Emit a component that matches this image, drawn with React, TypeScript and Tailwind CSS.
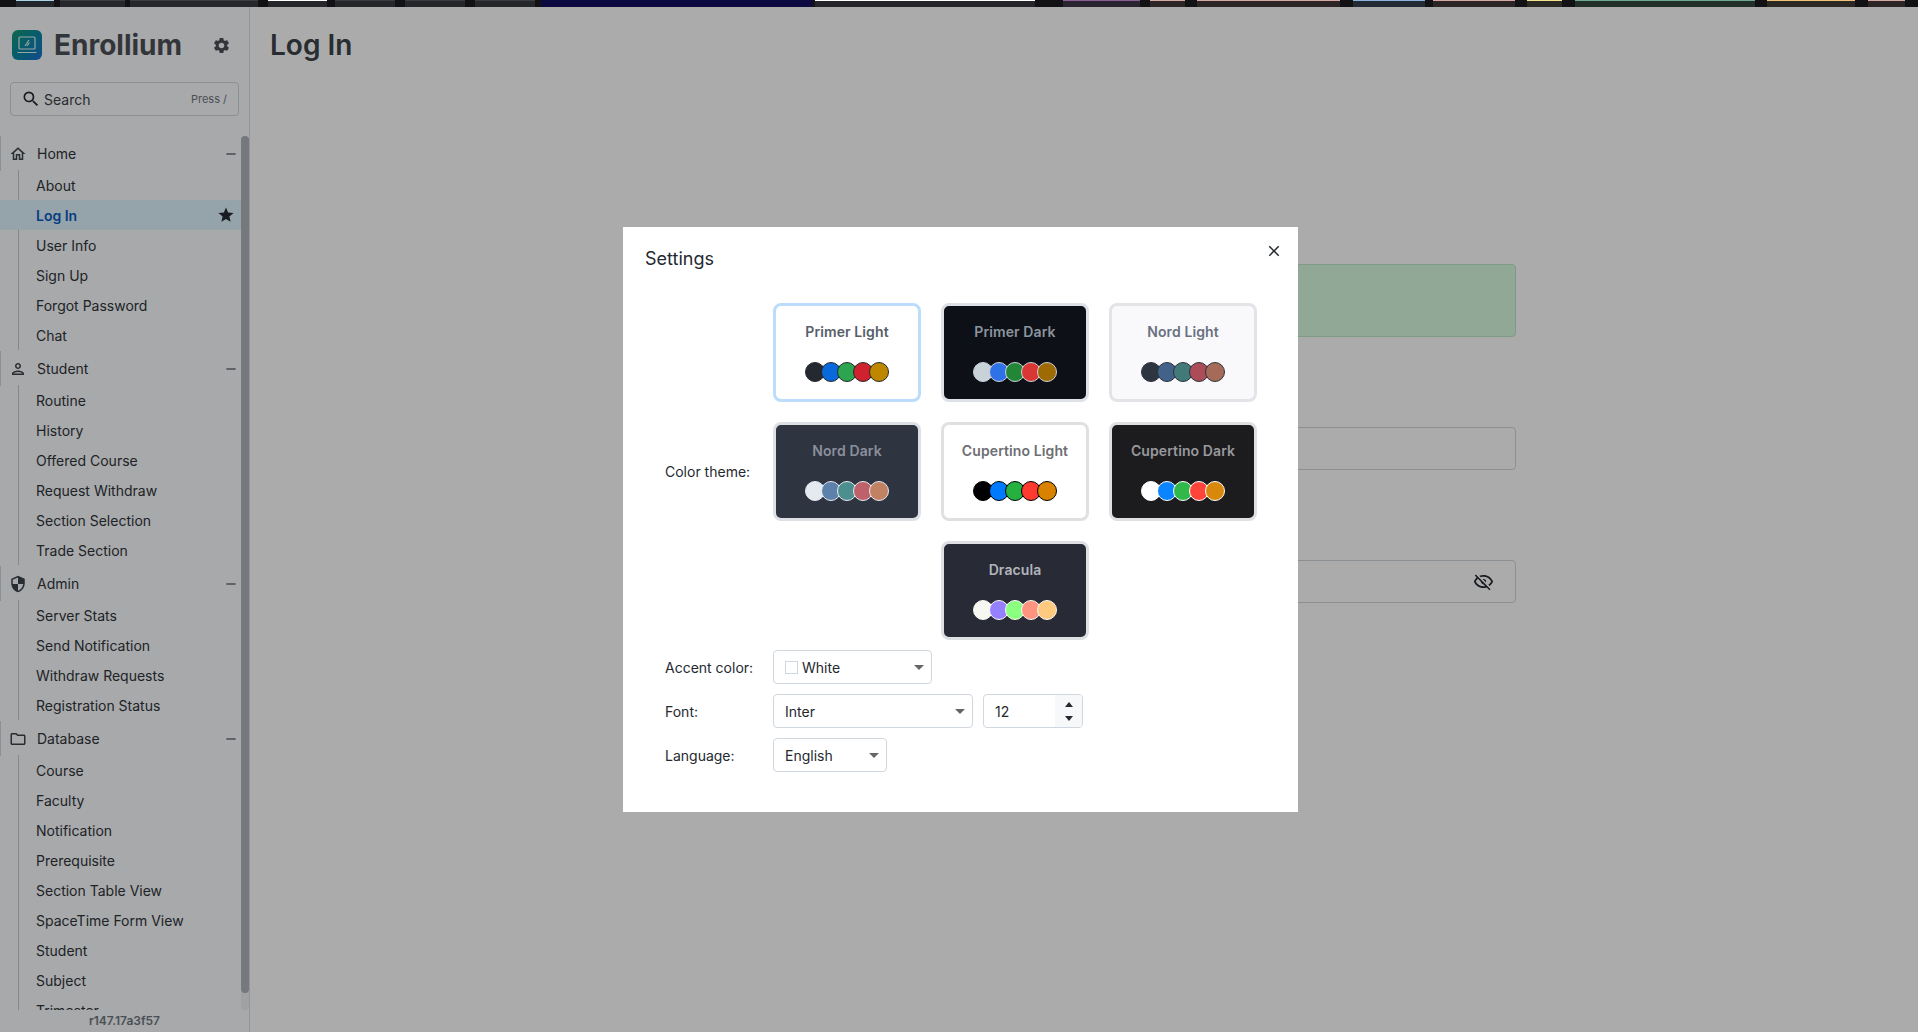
import {
  MdClose,
  MdOutlineFolder,
  MdOutlineHome,
  MdOutlinePerson,
  MdRemove,
  MdSearch,
  MdSecurity,
  MdSettings,
  MdStar,
} from "react-icons/md";

const strip = [
  "w-[16px]",
  "w-[38px] border-t border-[#a8d4e6] bg-[#23262b]",
  "w-[6px]",
  "w-[65px] border-t border-[#3c3d42] bg-[#26272b]",
  "w-[5px]",
  "w-[128px] border-t border-[#3c3d42] bg-[#26272b]",
  "w-[10px]",
  "w-[59px] border-t border-white bg-[#26272b]",
  "w-[8px]",
  "w-[60px] border-t border-[#3c3d42] bg-[#26272b]",
  "w-[10px]",
  "w-[60px] border-t border-[#3c3d42] bg-[#26272b]",
  "w-[10px]",
  "w-[60px] border-t border-[#3c3d42] bg-[#26272b]",
  "w-[6px]",
  "w-[271px] bg-[#0c0840]",
  "w-[3px]",
  "w-[220px] border-t border-white bg-[#26262a]",
  "w-[28px]",
  "w-[77px] border-t border-[#8a5d96] bg-[#2a2430]",
  "w-[10px]",
  "w-[35px] border-t border-[#d8a8a4] bg-[#2c2526]",
  "w-[12px]",
  "w-[143px] border-t border-[#d8a8a4] bg-[#2c2526]",
  "w-[13px]",
  "w-[72px] border-t border-[#8db4dc] bg-[#232a33]",
  "w-[8px]",
  "w-[82px] border-t border-[#d8a8a4] bg-[#2c2526]",
  "w-[12px]",
  "w-[35px] border-t border-[#f2e48e] bg-[#2c2a24]",
  "w-[13px]",
  "w-[180px] border-t border-[#6fa896] bg-[#233029]",
  "w-[12px]",
  "w-[88px] border-t border-[#f0c27a] bg-[#2c2824]",
  "w-[13px]",
  "w-[37px] border-t border-[#d8a8a4] bg-[#2c2526]",
];

const sections = [
  { name: "Home", icon: MdOutlineHome, items: ["About", "Log In", "User Info", "Sign Up", "Forgot Password", "Chat"] },
  {
    name: "Student",
    icon: MdOutlinePerson,
    items: ["Routine", "History", "Offered Course", "Request Withdraw", "Section Selection", "Trade Section"],
  },
  {
    name: "Admin",
    icon: MdSecurity,
    items: ["Server Stats", "Send Notification", "Withdraw Requests", "Registration Status"],
  },
  {
    name: "Database",
    icon: MdOutlineFolder,
    items: [
      "Course",
      "Faculty",
      "Notification",
      "Prerequisite",
      "Section Table View",
      "SpaceTime Form View",
      "Student",
      "Subject",
      "Trimester",
    ],
  },
];

const themes = [
  {
    name: "Primer Light",
    card: "bg-white border-[#bcdcfb] text-[#57606a]",
    ring: "border-[#24292f]",
    dots: ["bg-[#24292f]", "bg-[#0969da]", "bg-[#2da44e]", "bg-[#cf222e]", "bg-[#bf8700]"],
  },
  {
    name: "Primer Dark",
    card: "bg-[#0d1117] border-[#dee1e5] text-[#8b949e]",
    ring: "border-[#c9d1d9]",
    dots: ["bg-[#c9d1d9]", "bg-[#2f72e8]", "bg-[#238636]", "bg-[#da3633]", "bg-[#9e6a03]"],
  },
  {
    name: "Nord Light",
    card: "bg-[#f9f9fc] border-[#e2e4e8] text-[#6a7080]",
    ring: "border-[#2e3440]",
    dots: ["bg-[#2e3440]", "bg-[#42628a]", "bg-[#427a7a]", "bg-[#ab4d58]", "bg-[#a56b58]"],
  },
  {
    name: "Nord Dark",
    card: "bg-[#2e3440] border-[#dde0e5] text-[#8a909c]",
    ring: "border-[#e5e9f0]",
    dots: ["bg-[#e5e9f0]", "bg-[#5e81ac]", "bg-[#4d8f8f]", "bg-[#bf616a]", "bg-[#c18163]"],
  },
  {
    name: "Cupertino Light",
    card: "bg-white border-[#e0e0e3] text-[#6e6e73]",
    ring: "border-black",
    dots: ["bg-black", "bg-[#007aff]", "bg-[#24b140]", "bg-[#ff3b30]", "bg-[#d98200]"],
  },
  {
    name: "Cupertino Dark",
    card: "bg-[#1c1c1e] border-[#e0e0e3] text-[#98989d]",
    ring: "border-white",
    dots: ["bg-white", "bg-[#0a84ff]", "bg-[#30b84b]", "bg-[#ff453a]", "bg-[#d8880b]"],
  },
  {
    name: "Dracula",
    card: "bg-[#282a36] border-[#dee0e4] text-[#b4b5bc] col-start-2",
    ring: "border-[#f8f8f2]",
    dots: ["bg-[#f8f8f2]", "bg-[#9580ff]", "bg-[#8aff80]", "bg-[#ff9580]", "bg-[#ffca80]"],
  },
];

function Arrow() {
  return <span className="h-0 w-0 border-x-[5px] border-t-[5px] border-x-transparent border-t-[#666]" />;
}

function Sidebar() {
  return (
    <aside className="flex h-full w-[250px] shrink-0 flex-col border-r border-[#d8dee4] bg-[#fbfcfe]">
      <div className="flex items-center pl-[12px] pt-[20px]">
        <div className="flex h-[30px] w-[30px] items-center justify-center rounded-[6px] bg-gradient-to-br from-[#1a9a70] to-[#1e6fd1]">
          <svg viewBox="0 0 24 24" className="h-[24px] w-[24px]" fill="none" stroke="#e8f4f4" strokeWidth="1.2">
            <rect x="4" y="4" width="16" height="12" rx="1" />
            <path d="M2.5 19.5h19M10 13l4-6M12 13l2.5-3.5" />
          </svg>
        </div>
        <span className="ml-[12px] text-[28px] leading-[36px] font-bold text-[#4b5057]">Enrollium</span>
        <MdSettings className="ml-[30px] text-[19px] text-[#4b5057]" />
      </div>

      <div className="mx-[10px] mt-[19px] flex h-[34px] items-center rounded-[4px] border border-[#d0d7de] pl-[10px] pr-[11px]">
        <MdSearch className="text-[20px] text-[#24292f]" />
        <span className="ml-[3px] text-[14px] text-[#3d434a]">Search</span>
        <span className="ml-auto text-[11px] text-[#6e7781]">Press /</span>
      </div>

      <nav className="relative mt-[20px] min-h-0 flex-1 overflow-hidden">
        {sections.map((section) => (
          <div key={section.name}>
            <div className="flex h-[35px] items-center border-l border-[#d0d7de] pl-[8px] pr-[10px]">
              <section.icon className="text-[18px] text-[#3d434a]" />
              <span className="ml-[10px] text-[14px] text-[#2f353b]">{section.name}</span>
              <MdRemove className="ml-auto text-[16px] text-[#57606a]" />
            </div>
            <div className="-mt-[1px] mb-[1px] ml-[18px] border-l border-[#c4cbd3]">
              {section.items.map((item) =>
                item === "Log In" ? (
                  <div
                    key={item}
                    className="-ml-[19px] flex h-[30px] items-center bg-[#dff3ff] pl-[36px] pr-[14px] text-[14px] font-semibold text-[#0b5cc2]"
                  >
                    {item}
                    <MdStar className="ml-auto text-[18px] text-[#24292f]" />
                  </div>
                ) : (
                  <div key={item} className="flex h-[30px] items-center pl-[17px] text-[14px] text-[#2f353b]">
                    {item}
                  </div>
                ),
              )}
            </div>
          </div>
        ))}
        {/* scrollbar */}
        <div className="absolute inset-y-0 right-0 w-[8px] rounded-[4px] bg-[#eff0f2]">
          <div className="h-[857px] rounded-[4px] bg-[#afb3bb]" />
        </div>
      </nav>

      <div className="flex h-[22px] items-center justify-center text-[12px] font-semibold text-[#6e7781]">
        r147.17a3f57
      </div>
    </aside>
  );
}

function LoginPage() {
  return (
    <main className="min-w-0 flex-1 bg-white px-[20px] pt-[20px]">
      <h1 className="text-[28px] leading-[36px] font-semibold text-[#3d434a]">Log In</h1>
      <div className="mx-auto mt-[201px] w-[864px]">
        <div className="h-[73px] rounded-[4px] border border-[#bce8c6] bg-[#dafbe1]" />
        <div className="mt-[90px] h-[43px] rounded-[4px] border border-[#d0d7de]" />
        <div className="mt-[90px] flex h-[43px] items-center justify-end rounded-[4px] border border-[#d0d7de] pr-[21px]">
          <svg viewBox="0 0 24 24" className="h-[21px] w-[21px]" fill="#24292f">
            <path d="M2,5.27L3.28,4L20,20.72L18.73,22L15.65,18.92C14.5,19.3 13.28,19.5 12,19.5C7,19.5 2.73,16.39 1,12C1.69,10.24 2.79,8.69 4.19,7.46L2,5.27M12,9A3,3 0 0,1 15,12C15,12.35 14.94,12.69 14.83,13L11,9.17C11.31,9.06 11.65,9 12,9M12,4.5C17,4.5 21.27,7.61 23,12C22.18,14.08 20.79,15.88 19,17.19L17.58,15.76C18.94,14.82 20.06,13.54 20.82,12C19.17,8.64 15.76,6.5 12,6.5C10.91,6.5 9.84,6.68 8.84,7L7.3,5.47C8.74,4.85 10.33,4.5 12,4.5M3.18,12C4.83,15.36 8.24,17.5 12,17.5C12.69,17.5 13.37,17.43 14,17.29L11.72,15C10.29,14.85 9.15,13.71 9,12.28L5.6,8.87C4.61,9.72 3.78,10.78 3.18,12Z" />
          </svg>
        </div>
      </div>
    </main>
  );
}

function SettingsModal() {
  return (
    <div className="relative w-[675px] bg-white px-[22px] pb-[40px] pt-[18px] text-[#24292f]">
      <h2 className="text-[18px] leading-[28px]">Settings</h2>
      <MdClose className="absolute right-[15px] top-[15px] text-[18px] text-[#24292f]" />

      <div className="mt-[30px] grid grid-cols-[108px_auto] items-center gap-y-[10px] pl-[20px] text-[14px]">
        <span>Color theme:</span>
        <div className="grid grid-cols-[148px_148px_148px] gap-[20px]">
          {themes.map((theme) => (
            <div
              key={theme.name}
              className={`flex h-[99px] flex-col items-center rounded-[8px] border-[3px] pt-[16px] ${theme.card}`}
            >
              <span className="text-[14px] leading-[20px] font-semibold tracking-[0.1px]">{theme.name}</span>
              <div className="mt-[20px] flex">
                {theme.dots.map((dot) => (
                  <span
                    key={dot}
                    className={`-mr-[4px] h-[20px] w-[20px] rounded-full border last:mr-0 ${dot} ${theme.ring}`}
                  />
                ))}
              </div>
            </div>
          ))}
        </div>

        <span>Accent color:</span>
        <div className="flex h-[34px] w-[159px] items-center rounded-[4px] border border-[#d0d7de] pl-[11px] pr-[7px]">
          <span className="h-[13px] w-[13px] border border-[#d0d7de]" />
          <span className="ml-[4px]">White</span>
          <span className="ml-auto flex">
            <Arrow />
          </span>
        </div>

        <span>Font:</span>
        <div className="flex gap-[10px]">
          <div className="flex h-[34px] w-[200px] items-center justify-between rounded-[4px] border border-[#d0d7de] pl-[11px] pr-[7px]">
            Inter
            <Arrow />
          </div>
          <div className="flex h-[34px] w-[100px] items-center overflow-hidden rounded-[4px] border border-[#d0d7de] pl-[11px]">
            12
            <div className="ml-auto flex h-full w-[27px] flex-col items-center justify-center gap-[9px] bg-[#f6f8fa]">
              <span className="h-0 w-0 border-x-[4px] border-b-[5px] border-x-transparent border-b-[#24292f]" />
              <span className="h-0 w-0 border-x-[4px] border-t-[5px] border-x-transparent border-t-[#24292f]" />
            </div>
          </div>
        </div>

        <span>Language:</span>
        <div className="flex h-[34px] w-[114px] items-center justify-between rounded-[4px] border border-[#d0d7de] pl-[11px] pr-[7px]">
          English
          <Arrow />
        </div>
      </div>
    </div>
  );
}

export default function App() {
  return (
    <div className="flex h-screen flex-col overflow-hidden bg-white font-['Inter',sans-serif]">
      <div className="flex h-[7px] shrink-0 bg-[#121214]">
        {strip.map((cls, i) => (
          <div key={i} className={`h-full ${cls}`} />
        ))}
      </div>
      <div className="relative flex min-h-0 flex-1">
        <Sidebar />
        <LoginPage />
        <div className="absolute inset-0 flex items-center justify-center bg-black/33 pl-[3px]">
          <SettingsModal />
        </div>
      </div>
    </div>
  );
}
